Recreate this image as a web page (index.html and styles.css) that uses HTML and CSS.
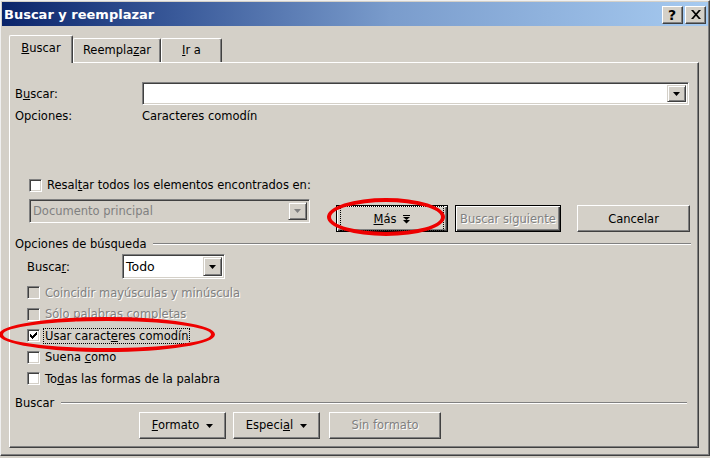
FILE: index.html
```html
<!DOCTYPE html>
<html lang="es">
<head>
<meta charset="utf-8">
<title>Buscar y reemplazar</title>
<link rel="stylesheet" href="styles.css">
</head>
<body>
<div class="window">
  <div class="titlebar">
    <span class="title">Buscar y reemplazar</span>
    <div class="tbtns">
      <span class="tbtn help">?</span>
      <span class="tbtn close"><svg width="9" height="8" viewBox="0 0 9 8"><path d="M0 0h2l2.5 2.8L7 0h2L5.5 4 9 8H7L4.5 5.2 2 8H0l3.5-4z" fill="#000"/></svg></span>
    </div>
  </div>

  <div class="tabs">
    <div class="tab active t1"><span><u>B</u>uscar</span></div>
    <div class="tab t2"><span>Reempla<u>z</u>ar</span></div>
    <div class="tab t3"><span><u>I</u>r a</span></div>
  </div>

  <div class="panel">
    <div class="row r-find">
      <span class="lbl lbl-find">B<u>u</u>scar:</span>
      <div class="field combo combo-find">
        <span class="ctext"></span>
        <span class="dd"><svg width="7" height="4" viewBox="0 0 7 4"><path d="M0 0h7L3.5 4z" fill="#000"/></svg></span>
      </div>
    </div>
    <div class="row r-opts">
      <span class="lbl lbl-find">Opciones:</span>
      <span>Caracteres comodín</span>
    </div>

    <div class="row r-hl">
      <span class="cb"></span>
      <span class="cbtext">Resal<u>t</u>ar todos los elementos encontrados en:</span>
    </div>

    <div class="row r-doc">
      <div class="field combo combo-doc disabled">
        <span class="ctext dis">Documento principal</span>
        <span class="dd"><svg width="7" height="4" viewBox="0 0 7 4"><path d="M0 0h7L3.5 4z" fill="#808080"/></svg></span>
      </div>
      <div class="btns-top">
        <div class="btn default w-mas"><span class="focus"><span><u>M</u>ás</span><svg class="dbl" width="7" height="9" viewBox="0 0 7 9"><path d="M0 0h7v1H0z M0 2h7L3.5 5z M0 5h7L3.5 8.5z" fill="#000"/></svg></span></div>
        <div class="btn default w-next"><span class="dis">Buscar siguiente</span></div>
        <div class="btn w-cancel"><span>Cancelar</span></div>
      </div>
    </div>

    <div class="sep sep1">
      <span class="septext">Opciones de búsqueda</span>
      <span class="sepline"></span>
    </div>

    <div class="row r-scope">
      <span class="lbl lbl-scope">Busca<u>r</u>:</span>
      <div class="field combo combo-scope">
        <span class="ctext">Todo</span>
        <span class="dd"><svg width="7" height="4" viewBox="0 0 7 4"><path d="M0 0h7L3.5 4z" fill="#000"/></svg></span>
      </div>
    </div>

    <div class="checks">
      <div class="crow"><span class="cb disabled"></span><span class="cbtext dis">Coincidir mayúsculas y minúscula</span></div>
      <div class="crow"><span class="cb disabled"></span><span class="cbtext dis">Sólo palabras completas</span></div>
      <div class="crow"><span class="cb"><svg width="7" height="7" viewBox="0 0 7 7"><path d="M0 2h1v1h1v1h1V3h1V2h1V1h1V0h1v3H6v1H5v1H4v1H3v1H2V6H1V5H0z" fill="#000"/></svg></span><span class="cbtext focused">Usar caract<u>e</u>res comodín</span></div>
      <div class="crow"><span class="cb"></span><span class="cbtext">Suena <u>c</u>omo</span></div>
      <div class="crow"><span class="cb"></span><span class="cbtext">To<u>d</u>as las formas de la palabra</span></div>
    </div>

    <div class="sep sep2">
      <span class="septext">Buscar</span>
      <span class="sepline"></span>
    </div>

    <div class="btns-bottom">
      <div class="btn w-fmt"><span><u>F</u>ormato</span><svg class="tri" width="7" height="4" viewBox="0 0 7 4"><path d="M0 0h7L3.5 4z" fill="#000"/></svg></div>
      <div class="btn w-esp"><span>Especi<u>a</u>l</span><svg class="tri" width="7" height="4" viewBox="0 0 7 4"><path d="M0 0h7L3.5 4z" fill="#000"/></svg></div>
      <div class="btn w-sin"><span class="dis">Sin formato</span></div>
    </div>
  </div>

  <div class="ring ring1"></div>
  <div class="ring ring2"></div>
</div>
</body>
</html>
```

FILE: styles.css
```css
* { box-sizing: border-box; }
html, body { margin: 0; padding: 0; }
body {
  width: 710px;
  height: 458px;
  background: #d4d0c8;
  font-family: "DejaVu Sans", Verdana, sans-serif;
  font-size: 11.5px;
  color: #000;
  overflow: hidden;
}
u { text-decoration: underline; text-underline-offset: 1px; }

.window {
  position: relative;
  width: 710px;
  height: 456px;
  border-top: 1px solid #f0f0f0;
  border-left: 1px solid #f0f0f0;
  border-right: 1px solid #404040;
  border-bottom: 1px solid #404040;
  box-shadow: inset -1px -1px #808080;
  background: #d4d0c8;
}

.titlebar {
  margin: 1px 1px 0 1px;
  height: 24px;
  background: linear-gradient(to right, #0a246a 0%, #3a5a9a 25%, #7a9ccc 55%, #a6caf0 100%);
  display: flex;
  align-items: center;
  justify-content: space-between;
  padding: 0 2px 0 2px;
}
.title {
  color: #fff;
  font-weight: bold;
  font-size: 13px;
}
.tbtns { display: flex; gap: 2px; padding-top: 1px; }
.tbtn {
  width: 21px;
  height: 18px;
  background: #d4d0c8;
  border: 1px solid;
  border-color: #fff #404040 #404040 #fff;
  box-shadow: inset -1px -1px #808080;
  display: flex;
  align-items: center;
  justify-content: center;
}
.help { font-weight: bold; font-size: 14px; line-height: 1; padding-right: 1px; }
.close svg { width: 10px; height: 9px; }

.tabs {
  display: flex;
  align-items: flex-end;
  height: 27px;
  margin: 9px 0 0 8px;
}
.tab {
  height: 24px;
  border-top: 1px solid #fff;
  border-left: 1px solid #fff;
  border-right: 1px solid #404040;
  box-shadow: inset -1px 0 #808080;
  border-radius: 2px 2px 0 0;
  display: flex;
  align-items: center;
  justify-content: center;
  padding-bottom: 1px;
}
.tab.active {
  position: relative;
  z-index: 1;
  height: 28px;
  margin-bottom: -1px;
  background: #d4d0c8;
  padding-bottom: 3px;
}
.t1 { width: 64px; }
.t2 { width: 88px; }
.t3 { width: 61px; }

.panel {
  margin-left: 8px;
  width: 690px;
  height: 386px;
  border: 1px solid;
  border-color: #fff #404040 #404040 #fff;
  box-shadow: inset -1px -1px #808080;
  padding: 0 0 0 5px;
}

.row { display: flex; align-items: center; }
.lbl-find { width: 127px; }
.r-find { margin-top: 19px; height: 23px; }
.r-opts { margin-top: 3px; height: 16px; }
.r-hl { margin-top: 53px; height: 16px; padding-left: 14px; }
.r-doc { margin-top: 6px; align-items: flex-start; padding-left: 14px; }

.field {
  background: #fff;
  border: 1px solid;
  border-color: #808080 #fff #fff #808080;
  box-shadow: inset 1px 1px #404040, inset -1px -1px #d4d0c8;
}
.field.disabled { background: #d4d0c8; }
.combo {
  display: flex;
  align-items: center;
  justify-content: space-between;
  padding: 2px 2px 2px 3px;
}
.combo-find { width: 547px; height: 23px; }
.combo-doc { width: 281px; height: 24px; }
.combo-scope { width: 103px; height: 25px; font-size: 12.5px; }
.dd {
  width: 19px;
  height: 100%;
  background: #d4d0c8;
  border: 1px solid;
  border-color: #d4d0c8 #404040 #404040 #d4d0c8;
  box-shadow: inset 1px 1px #fff, inset -1px -1px #808080;
  display: flex;
  align-items: center;
  justify-content: center;
}

.dis { color: #808080; text-shadow: 1px 1px 0 #fff; }
.combo .dis { text-shadow: none; }

.cb {
  width: 13px;
  height: 13px;
  flex: none;
  background: #fff;
  border: 1px solid;
  border-color: #808080 #fff #fff #808080;
  box-shadow: inset 1px 1px #404040, inset -1px -1px #d4d0c8;
  display: flex;
  align-items: center;
  justify-content: center;
}
.cb.disabled { background: #d4d0c8; }
.cbtext { margin-left: 5px; }
.focused { outline: 1px dotted #000; padding: 0 1px; margin-left: 4px; }

.btns-top { display: flex; margin-top: 6px; margin-left: 26px; }
.btn {
  height: 27px;
  background: #d4d0c8;
  border: 1px solid;
  border-color: #fff #404040 #404040 #fff;
  box-shadow: inset -1px -1px #808080;
  display: flex;
  align-items: center;
  justify-content: center;
}
.btn.default {
  border-color: #000;
  box-shadow: inset 1px 1px #fff, inset -1px -1px #404040, inset -2px -2px #808080;
}
.focus {
  display: flex;
  align-items: center;
  justify-content: center;
  gap: 7px;
  width: 100%;
  height: 100%;
  margin: 3px;
  border: 1px dotted #000;
}
.dbl { margin-top: 1px; }
.w-mas { width: 112px; }
.w-next { width: 106px; margin-left: 7px; }
.w-cancel { width: 113px; margin-left: 16px; }

.sep { display: flex; align-items: center; height: 16px; }
.sep1 { margin-top: 4px; }
.sep2 { margin-top: 5px; }
.sepline {
  flex: 1;
  height: 2px;
  margin-left: 6px;
  border-top: 1px solid #808080;
  border-bottom: 1px solid #fff;
}
.sep1 .sepline { margin-right: 7px; }
.sep2 .sepline { margin-right: 11px; margin-left: 7px; }

.r-scope { margin-top: 2px; padding-left: 12px; }
.lbl-scope { width: 95px; }

.checks { margin-top: 3px; padding-left: 12px; }
.crow { display: flex; align-items: center; height: 21.5px; }

.btns-bottom { display: flex; margin-top: 1px; padding-left: 124px; }
.w-fmt { width: 87px; gap: 7px; }
.w-esp { width: 87px; margin-left: 7px; gap: 7px; }
.w-sin { width: 112px; margin-left: 9px; }
.tri { margin-top: 1px; }

.ring {
  position: absolute;
  border: 4px solid #ee0000;
  border-radius: 50%;
  pointer-events: none;
}
.ring1 { left: 326px; top: 197px; width: 118px; height: 38px; }
.ring2 { left: -2px; top: 316px; width: 216px; height: 35px; }
```
